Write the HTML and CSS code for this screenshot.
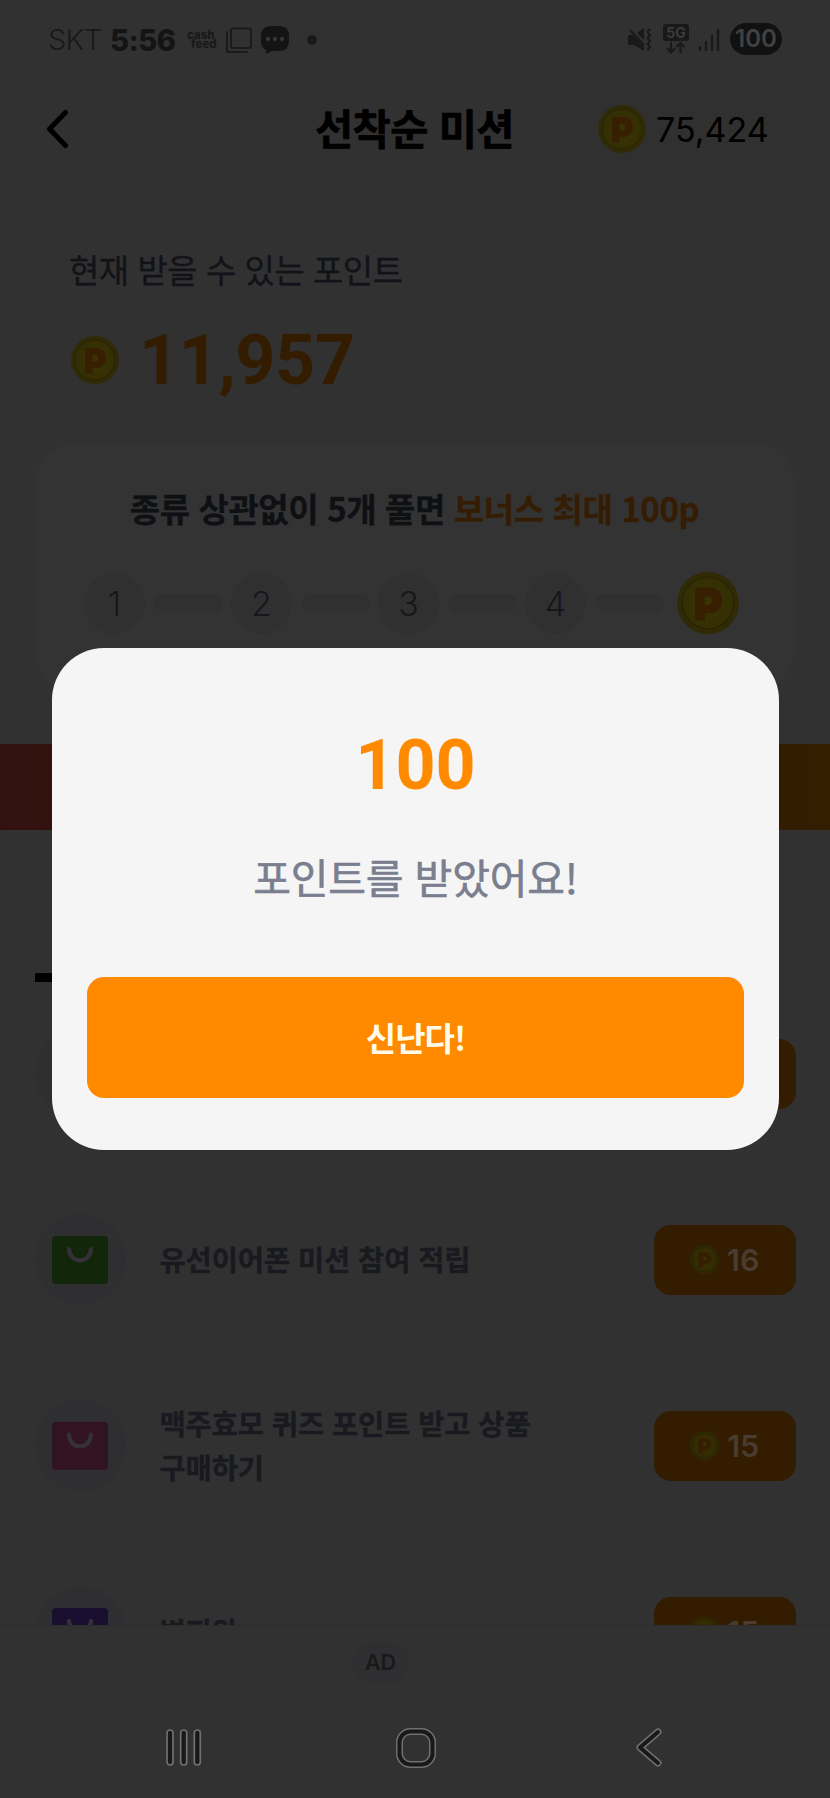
FILE: index.html
```
<!DOCTYPE html>
<html lang="ko">
<head>
<meta charset="utf-8">
<title>선착순 미션</title>
<link rel="stylesheet" href="styles.css">
</head>
<body>
<svg width="0" height="0" class="defs">
  <defs>
    <radialGradient id="gold"><stop offset="0" stop-color="#393503"/><stop offset="1" stop-color="#332f04"/></radialGradient>
    <symbol id="coin" viewBox="0 0 48 48">
      <circle cx="24" cy="24" r="24" fill="#302b06"/>
      <circle cx="24" cy="24" r="20" fill="url(#gold)" stroke="#292302" stroke-width="1"/>
      <path fill="#381f02" fill-rule="evenodd" d="M14 12H25.500C31.500 12 35 16.500 35 22S31.500 32 25.500 32H21.500V37.500H14ZM21.500 19V25.500H24A3.250 3.250 0 0 0 24 19Z"/>
    </symbol>
    <symbol id="bag" viewBox="0 0 56 48">
      <rect width="56" height="48" rx="4" fill="currentColor"/>
      <path d="M17 13C18 28 38 28 39 13" fill="none" stroke="#343238" stroke-width="4" stroke-linecap="round"/>
    </symbol>
  </defs>
</svg>
<div class="screen">
  <div class="status">
    <span class="carrier">SKT</span>
    <span class="clock">5:56</span>
    <span class="cashfeed"><span>cash</span><span class="feed">feed</span></span>
    <svg class="squares" width="26" height="27" viewBox="0 0 26 27" fill="none" stroke="#1b1b1b" stroke-width="2"><rect x="5" y="1.500" width="20" height="19.500" rx="2"/><path d="M1 4.500V23Q1 25 3 25H21.500"/></svg>
    <svg class="bubble" width="28" height="28" viewBox="0 0 28 28"><path fill="#141414" d="M10 0H18Q28 0 28 10V15Q28 25 18 25H11L5 28V24Q0 22 0 15V10Q0 0 10 0Z"/><g fill="#3a3a3a"><circle cx="7" cy="13" r="2"/><circle cx="14" cy="13" r="2"/><circle cx="21" cy="13" r="2"/></g></svg>
    <span class="dot"></span>
    <svg class="mute" width="24" height="24" viewBox="0 0 24 24"><path fill="#191919" d="M0 8Q0 7 1 7H5L16 18V23L6 17H1Q0 17 0 16ZM9 5L16 0V12Z"/><path d="M2 2L16 17" stroke="#191919" stroke-width="2"/><path d="M22 1L19.500 4L22 7L19.500 10L22 13L19.500 16L22 19L19.500 22" fill="none" stroke="#191919" stroke-width="2"/></svg>
    <span class="network"><span class="fiveg">5G</span><svg width="20" height="12" viewBox="0 0 20 12" fill="none" stroke="#191919" stroke-width="2"><path d="M5 0V10M1 6L5 10.500L9 6M14.500 11V1M10.500 5L14.500 .8L18.500 5"/></svg></span>
    <svg class="signal" width="22" height="24" viewBox="0 0 22 24" stroke="#191919" stroke-width="2.400" stroke-linecap="round"><path d="M2 19.500V22M8 14V22M14 8V22M20 2V22"/></svg>
    <span class="battery">100</span>
  </div>
  <header class="header">
    <svg class="back" width="23" height="40" viewBox="0 0 23 40"><path d="M19.500 3.500L3.500 20L19.500 36.500" fill="none" stroke="#000" stroke-width="5" stroke-linecap="round" stroke-linejoin="round"/></svg>
    <h1 class="title">선착순 미션</h1>
    <div class="wallet"><svg class="coin"><use href="#coin"/></svg><span>75,424</span></div>
  </header>
  <section class="available">
    <p class="label">현재 받을 수 있는 포인트</p>
    <div class="total"><svg class="coin"><use href="#coin"/></svg><strong>11,957</strong></div>
  </section>
  <section class="bonus">
    <h2 class="bonus-title">종류 상관없이 5개 풀면 <em>보너스 최대 100p</em></h2>
    <div class="steps">
      <span class="step">1</span><i class="bar"></i><span class="step">2</span><i class="bar"></i><span class="step">3</span><i class="bar"></i><span class="step">4</span><i class="bar"></i><svg class="step-coin"><use href="#coin"/></svg>
    </div>
  </section>
  <div class="band"></div>
  <main class="missions">
    <div class="tabline"></div>
    <div class="row"><span class="thumb"></span><p></p><span class="reward"></span></div>
    <div class="row"><span class="thumb green"><svg><use href="#bag"/></svg></span><p>유선이어폰 미션 참여 적립</p><span class="reward"><svg><use href="#coin"/></svg>16</span></div>
    <div class="row"><span class="thumb pink"><svg><use href="#bag"/></svg></span><p>맥주효모 퀴즈 포인트 받고 상품 구매하기</p><span class="reward"><svg><use href="#coin"/></svg>15</span></div>
    <div class="row"><span class="thumb purple"><svg><use href="#bag"/></svg></span><p>벽지와</p><span class="reward"><svg><use href="#coin"/></svg>15</span></div>
  </main>
  <footer class="footer">
    <span class="ad">AD</span>
    <nav class="nav">
      <svg width="40" height="42" viewBox="0 0 40 42" fill="#191919" stroke="#707070" stroke-width="1.700"><rect x="3" y="3" width="6" height="35" rx="3"/><rect x="16.700" y="3" width="6" height="35" rx="3"/><rect x="30.300" y="3" width="6" height="35" rx="3"/></svg>
      <svg class="nav-home" width="42" height="42" viewBox="0 0 42 42" fill="none"><rect x="4.500" y="4.500" width="33" height="33" rx="11" stroke="#707070" stroke-width="7"/><rect x="4.500" y="4.500" width="33" height="33" rx="11" stroke="#191919" stroke-width="4"/></svg>
      <svg class="nav-back" width="30" height="42" viewBox="0 0 30 42" fill="none" stroke-linecap="round" stroke-linejoin="round"><path d="M23 5L5 20.500L23 36" stroke="#707070" stroke-width="7"/><path d="M23 5L5 20.500L23 36" stroke="#191919" stroke-width="4"/></svg>
    </nav>
  </footer>
  <div class="modal" role="dialog">
    <strong class="amount">100</strong>
    <p class="message">포인트를 받았어요!</p>
    <button class="confirm">신난다!</button>
  </div>
</div>
</body>
</html>
```
FILE: styles.css
```
* { box-sizing: border-box; margin: 0; padding: 0; }
body { background: #313131; }
.defs { display: block; position: absolute; }
.screen {
  position: relative; display: flex; flex-direction: column;
  width: 830px; height: 1798px; overflow: hidden;
  background: #313131; color: #000;
  font-family: "Noto Sans CJK KR", sans-serif;
}
svg { display: block; flex: none; }

.status { display: flex; align-items: center; height: 80px; padding-left: 48px; flex: none; color: #191919; font-family: Inter, sans-serif; white-space: nowrap; }
.carrier { width: 62px; font-size: 29px; font-weight: 300; letter-spacing: -.7px; line-height: 80px; }
.clock { width: 77px; font-size: 29.500px; font-weight: 800; letter-spacing: -.8px; color: #141414; }
.cashfeed { display: flex; flex-direction: column; width: 39px; font-size: 11.500px; line-height: 9px; font-weight: 800; }
.feed { padding-left: 4px; }
.squares { margin-right: 9px; }
.bubble { margin-right: 18px; }
.dot { width: 10px; height: 10px; border-radius: 5px; background: #191919; margin-right: 311px; }
.mute { margin-right: 11px; }
.network { display: flex; flex-direction: column; align-items: center; gap: 1px; width: 26px; margin: -3px 9px 0 0; }
.fiveg { width: 26px; height: 17px; border-radius: 3px; background: #191919; color: #3b3b3b; font: 700 14px/17px Inter, sans-serif; text-align: center; }
.signal { margin-right: 10px; }
.battery { width: 52px; height: 32px; border-radius: 16px; background: #111; color: #414141; font-size: 24px; font-weight: 600; line-height: 32px; text-align: center; margin-top: -2px; }

.header { display: grid; grid-template-columns: 1fr 220px 1fr; align-items: center; height: 98px; padding: 0 35px 0 46px; flex: none; }
.title { margin: -4px 0 0 -12px; font-size: 41.500px; font-weight: 700; line-height: 60px; letter-spacing: -.6px; text-align: center; white-space: nowrap; -webkit-text-stroke: .7px currentColor; }
.wallet { justify-self: end; display: flex; align-items: center; gap: 10px; width: 225px; height: 77px; padding-left: 28px; border-radius: 39px; background: #303030; font: 400 34px Inter, sans-serif; letter-spacing: 0; }
.coin { width: 48px; height: 48px; }

.available { height: 264px; padding: 65px 70px 0; flex: none; }
.label { font-size: 33px; line-height: 52px; letter-spacing: -.5px; color: #121318; -webkit-text-stroke: .3px currentColor; margin-left: -1px; }
.total { display: flex; align-items: center; gap: 20px; height: 82px; margin: 24px 0 0 1px; }
.total strong { font: 700 70px/82px Roboto, sans-serif; letter-spacing: -.4px; color: #331c00; }

.bonus { height: 250px; margin: 0 35px 0 34px; padding-top: 41px; border-radius: 44px; background: #333; flex: none; }
.bonus-title { font-size: 33px; line-height: 50px; font-weight: 700; letter-spacing: -.4px; color: #0f1013; text-align: center; white-space: nowrap; -webkit-text-stroke: .3px currentColor; }
.bonus-title em { font-style: normal; color: #351d03; }
.steps { display: flex; align-items: center; gap: 8.500px; margin: 39px 0 0 50px; height: 62px; }
.step { width: 61px; height: 61px; border-radius: 50%; background: #303031; color: #16171b; font: 300 34px/61px Inter, sans-serif; text-align: center; }
.bar { width: 69px; height: 18px; border-radius: 9px; background: #303030; }
.step-coin { width: 62px; height: 62px; margin-left: 5px; }

.band { height: 86px; margin-top: 52px; background: linear-gradient(90deg, #33110f, #331e00); flex: none; }
.missions { height: 795px; padding: 143px 34.500px 0; overflow: hidden; flex: none; }
.tabline { width: 200px; height: 9px; margin-bottom: -1.500px; background: #000; }
.row { display: flex; align-items: center; height: 186px; }
.row p { width: 400px; margin: -1px 0 0 34px; font-size: 28.500px; font-weight: 700; line-height: 44px; letter-spacing: -.1px; color: #191a1f; word-break: keep-all; -webkit-text-stroke: .4px currentColor; }
.thumb { display: grid; place-items: center; width: 91px; height: 91px; border-radius: 50%; background: #2f2f32; flex: none; }
.thumb svg { width: 56px; height: 48px; }
.green { color: #12260a; }
.pink { color: #321421; }
.purple { color: #1b0f2f; }
.reward { display: flex; align-items: center; justify-content: center; gap: 8px; width: 141.500px; height: 70px; margin-left: auto; border-radius: 17px; background: #331c00; color: #493c30; font: 600 30.500px Inter, sans-serif; }
.reward svg { width: 29px; height: 29px; opacity: .85; }

.footer { flex: 1; border-top: 1px solid #2c2c2c; padding-top: 16px; }
.ad { display: block; width: 57px; height: 41px; margin-left: 352px; border-radius: 21px; background: #2f2f32; color: #191919; font: 600 21.500px/41px Inter, sans-serif; text-align: center; }
.nav { display: flex; align-items: center; gap: 190px; margin-top: 44px; padding-left: 164px; }
.nav-home { margin-left: 1px; }
.nav-back { margin-left: 8px; }

.modal { position: absolute; left: 52px; top: 648px; width: 727px; height: 502px; padding: 76px 35px 52px; border-radius: 52px; background: #f5f5f5; display: flex; flex-direction: column; align-items: center; }
.amount { font: 700 70px/82px Roboto, sans-serif; color: #ff8a00; }
.message { margin-top: 40px; font-size: 41px; line-height: 60px; letter-spacing: -.2px; color: #7a7e8e; -webkit-text-stroke: .6px currentColor; }
.confirm { margin-top: auto; width: 657px; height: 121px; padding-bottom: 2px; border: 0; border-radius: 17px; background: #ff8a00; color: #fffbe8; font: 700 33px "Noto Sans CJK KR", sans-serif; letter-spacing: -1px; }
```
